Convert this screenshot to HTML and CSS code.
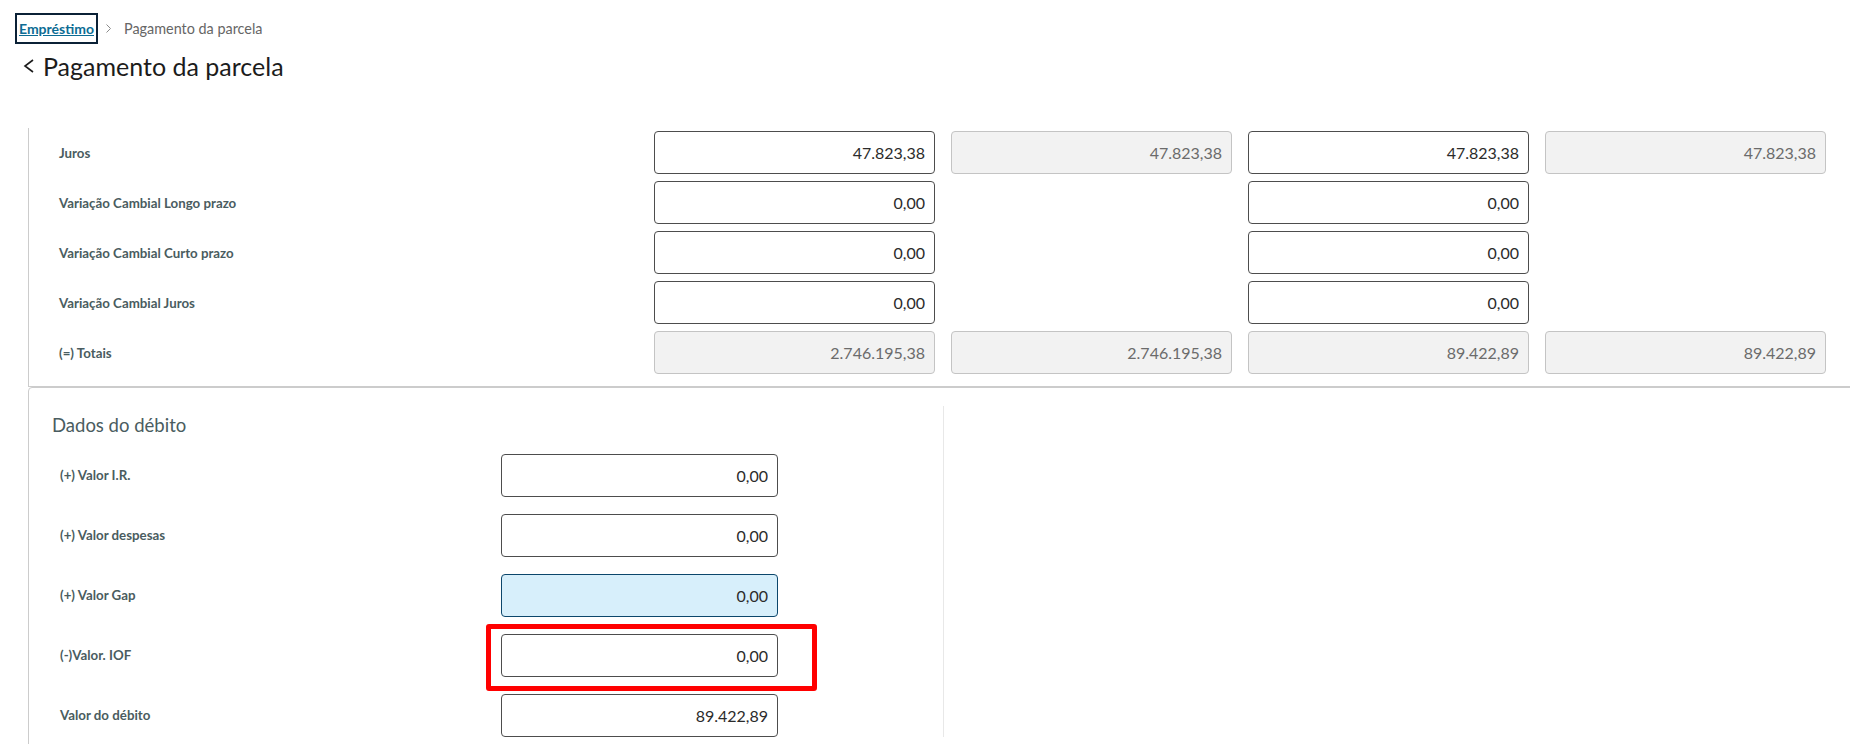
FILE: index.html
```html
<!DOCTYPE html>
<html lang="pt-BR">
<head>
    <meta charset="UTF-8">
    <meta name="viewport" content="width=device-width, initial-scale=1.0">
    <title>Pagamento da parcela</title>
    <link rel="stylesheet" href="styles.css">
</head>
<body>
    <header class="page-header">
        <nav class="breadcrumb">
            <a class="crumb-link" href="#">Empréstimo</a>
            <svg class="crumb-sep" width="5" height="9" viewBox="0 0 5 9"><polyline points="0.5,0.5 4.5,4.5 0.5,8.5" fill="none" stroke="#8a8a8a" stroke-width="1"/></svg>
            <span class="crumb-current">Pagamento da parcela</span>
        </nav>
        <h1 class="page-title">
            <svg class="back" width="12" height="14" viewBox="0 0 12 14"><polyline points="10,1 2,7 10,13" fill="none" stroke="#1c1c1c" stroke-width="1.6"/></svg>
            Pagamento da parcela
        </h1>
    </header>

    <main class="page-content">
        <!-- Valores da parcela -->
        <section class="card card-values">
            <div class="values-grid">
                <span class="row-label">Juros</span>
                <input class="field" value="47.823,38">
                <input class="field" value="47.823,38" disabled>
                <input class="field" value="47.823,38">
                <input class="field" value="47.823,38" disabled>

                <span class="row-label">Variação Cambial Longo prazo</span>
                <input class="field" value="0,00">
                <span></span>
                <input class="field" value="0,00">
                <span></span>

                <span class="row-label">Variação Cambial Curto prazo</span>
                <input class="field" value="0,00">
                <span></span>
                <input class="field" value="0,00">
                <span></span>

                <span class="row-label">Variação Cambial Juros</span>
                <input class="field" value="0,00">
                <span></span>
                <input class="field" value="0,00">
                <span></span>

                <span class="row-label">(=) Totais</span>
                <input class="field" value="2.746.195,38" disabled>
                <input class="field" value="2.746.195,38" disabled>
                <input class="field" value="89.422,89" disabled>
                <input class="field" value="89.422,89" disabled>
            </div>
        </section>

        <!-- Dados do débito -->
        <section class="card card-debit">
            <div class="debit-col">
                <h2 class="section-title">Dados do débito</h2>
                <div class="debit-row">
                    <span class="row-label">(+) Valor I.R.</span>
                    <input class="field" value="0,00">
                </div>
                <div class="debit-row">
                    <span class="row-label">(+) Valor despesas</span>
                    <input class="field" value="0,00">
                </div>
                <div class="debit-row">
                    <span class="row-label">(+) Valor Gap</span>
                    <input class="field field-focus" value="0,00">
                </div>
                <div class="debit-row">
                    <span class="row-label">(-)Valor. IOF</span>
                    <div class="field-wrap">
                        <input class="field" value="0,00">
                        <div class="highlight"></div>
                    </div>
                </div>
                <div class="debit-row">
                    <span class="row-label">Valor do débito</span>
                    <input class="field" value="89.422,89">
                </div>
            </div>
        </section>
    </main>
</body>
</html>
```

FILE: styles.css
```css
body {
    margin: 0;
    height: 100vh;
    overflow: hidden;
    font-family: Lato, "Open Sans", sans-serif;
    color: #1c1c1c;
    background-color: #fff;
}

/* cabeçalho */
.page-header {
    padding: 13px 0 0 15px;
}
.breadcrumb {
    display: flex;
    align-items: center;
    height: 31px;
    font-size: 14px;
}
.crumb-link {
    box-sizing: border-box;
    height: 31px;
    line-height: 27px;
    padding: 0 2px;
    border: 2px solid #0b2136;
    color: #0c6c94;
    font-weight: 700;
    text-decoration: underline;
}
.crumb-sep {
    margin: 0 13px 0 8px;
}
.crumb-current {
    font-size: 14.4px;
    color: #666;
}
.page-title {
    display: flex;
    align-items: center;
    margin: 6px 0 0 8px;
    height: 32px;
    font-size: 25px;
    font-weight: 400;
}
.back {
    margin-right: 8px;
}

/* conteúdo */
.page-content {
    margin-top: 46px;
    margin-right: -10px;
    padding-left: 28px;
}
.card {
    border: 1px solid #ccc;
    background: #fff;
}
.card-values {
    border-top: none;
    padding: 3px 0 12px 30px;
}
.values-grid {
    display: grid;
    grid-template-columns: 579px repeat(4, 281px);
    grid-auto-rows: 43px;
    column-gap: 16px;
    row-gap: 7px;
    align-items: center;
}
.row-label {
    font-size: 13.3px;
    font-weight: 700;
    color: #4a5c60;
}
.field {
    box-sizing: border-box;
    width: 100%;
    height: 43px;
    padding: 0 9px;
    border: 1px solid #4d4d4d;
    border-radius: 4px;
    background: #fff;
    font-family: inherit;
    font-size: 16px;
    color: #2b2b2b;
    text-align: right;
}
.field:disabled {
    background: #f2f2f2;
    border-color: #c4c4c4;
    color: #6b6b6b;
}
.field-focus {
    background: #d7effb;
    border-color: #0c466b;
}

.card-debit {
    border-radius: 4px 0 0 0;
    padding: 18px 0 0 23px;
}
.debit-col {
    width: 891px;
    border-right: 1px solid #e8e8e8;
    padding-top: 7px;
}
.section-title {
    margin: 0 0 17px;
    font-size: 18.5px;
    line-height: 24px;
    font-weight: 400;
    color: #4a5c60;
}
.debit-row {
    display: flex;
    align-items: center;
    height: 43px;
    margin-bottom: 17px;
    padding-left: 8px;
}
.debit-row .row-label {
    width: 441px;
    padding-bottom: 2px;
}
.debit-row > .field,
.field-wrap {
    width: 277px;
}
.field-wrap {
    position: relative;
}
.highlight {
    position: absolute;
    top: -10px;
    left: -15px;
    right: -39px;
    bottom: -14px;
    border: 5px solid #ff0000;
    border-radius: 3px;
}
```
